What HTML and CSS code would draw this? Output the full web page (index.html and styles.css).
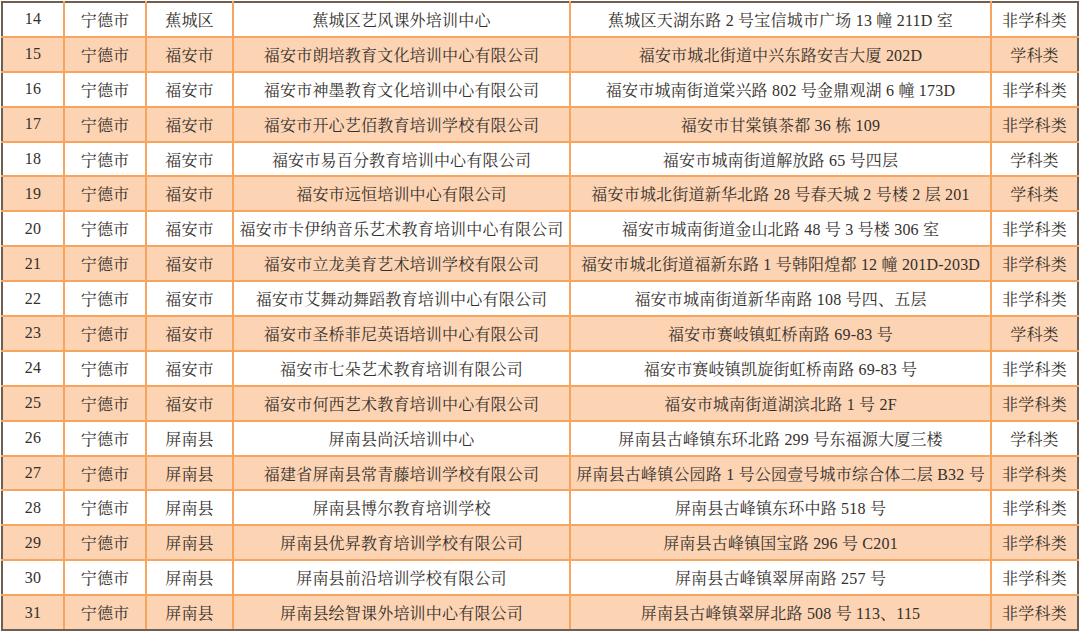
FILE: index.html
```html
<!DOCTYPE html>
<html lang="zh-CN">
<head>
<meta charset="utf-8">
<title>培训机构名单</title>
<link rel="stylesheet" href="styles.css">
</head>
<body>
<table class="list">
  <colgroup>
    <col class="c-no"><col class="c-city"><col class="c-area"><col class="c-name"><col class="c-addr"><col class="c-type">
  </colgroup>
  <tbody>
    <tr><td>14</td><td>宁德市</td><td>蕉城区</td><td>蕉城区艺风课外培训中心</td><td>蕉城区天湖东路 2 号宝信城市广场 13 幢 211D 室</td><td>非学科类</td></tr>
    <tr><td>15</td><td>宁德市</td><td>福安市</td><td>福安市朗培教育文化培训中心有限公司</td><td>福安市城北街道中兴东路安吉大厦 202D</td><td>学科类</td></tr>
    <tr><td>16</td><td>宁德市</td><td>福安市</td><td>福安市神墨教育文化培训中心有限公司</td><td>福安市城南街道棠兴路 802 号金鼎观湖 6 幢 173D</td><td>非学科类</td></tr>
    <tr><td>17</td><td>宁德市</td><td>福安市</td><td>福安市开心艺佰教育培训学校有限公司</td><td>福安市甘棠镇茶都 36 栋 109</td><td>非学科类</td></tr>
    <tr><td>18</td><td>宁德市</td><td>福安市</td><td>福安市易百分教育培训中心有限公司</td><td>福安市城南街道解放路 65 号四层</td><td>学科类</td></tr>
    <tr><td>19</td><td>宁德市</td><td>福安市</td><td>福安市远恒培训中心有限公司</td><td>福安市城北街道新华北路 28 号春天城 2 号楼 2 层 201</td><td>学科类</td></tr>
    <tr><td>20</td><td>宁德市</td><td>福安市</td><td>福安市卡伊纳音乐艺术教育培训中心有限公司</td><td>福安市城南街道金山北路 48 号 3 号楼 306 室</td><td>非学科类</td></tr>
    <tr><td>21</td><td>宁德市</td><td>福安市</td><td>福安市立龙美育艺术培训学校有限公司</td><td>福安市城北街道福新东路 1 号韩阳煌都 12 幢 201D-203D</td><td>非学科类</td></tr>
    <tr><td>22</td><td>宁德市</td><td>福安市</td><td>福安市艾舞动舞蹈教育培训中心有限公司</td><td>福安市城南街道新华南路 108 号四、五层</td><td>非学科类</td></tr>
    <tr><td>23</td><td>宁德市</td><td>福安市</td><td>福安市圣桥菲尼英语培训中心有限公司</td><td>福安市赛岐镇虹桥南路 69-83 号</td><td>学科类</td></tr>
    <tr><td>24</td><td>宁德市</td><td>福安市</td><td>福安市七朵艺术教育培训有限公司</td><td>福安市赛岐镇凯旋街虹桥南路 69-83 号</td><td>非学科类</td></tr>
    <tr><td>25</td><td>宁德市</td><td>福安市</td><td>福安市何西艺术教育培训中心有限公司</td><td>福安市城南街道湖滨北路 1 号 2F</td><td>非学科类</td></tr>
    <tr><td>26</td><td>宁德市</td><td>屏南县</td><td>屏南县尚沃培训中心</td><td>屏南县古峰镇东环北路 299 号东福源大厦三楼</td><td>学科类</td></tr>
    <tr><td>27</td><td>宁德市</td><td>屏南县</td><td>福建省屏南县常青藤培训学校有限公司</td><td>屏南县古峰镇公园路 1 号公园壹号城市综合体二层 B32 号</td><td>非学科类</td></tr>
    <tr><td>28</td><td>宁德市</td><td>屏南县</td><td>屏南县博尔教育培训学校</td><td>屏南县古峰镇东环中路 518 号</td><td>非学科类</td></tr>
    <tr><td>29</td><td>宁德市</td><td>屏南县</td><td>屏南县优昇教育培训学校有限公司</td><td>屏南县古峰镇国宝路 296 号 C201</td><td>非学科类</td></tr>
    <tr><td>30</td><td>宁德市</td><td>屏南县</td><td>屏南县前沿培训学校有限公司</td><td>屏南县古峰镇翠屏南路 257 号</td><td>非学科类</td></tr>
    <tr><td>31</td><td>宁德市</td><td>屏南县</td><td>屏南县绘智课外培训中心有限公司</td><td>屏南县古峰镇翠屏北路 508 号 113、115</td><td>非学科类</td></tr>
  </tbody>
</table>
</body>
</html>
```

FILE: styles.css
```css
html, body {
  margin: 0;
  padding: 0;
  background: #ffffff;
}

body {
  padding: 1px 0 0 1px;
}

.list {
  border-collapse: collapse;
  table-layout: fixed;
  width: 1076px;
  font-family: "Liberation Serif", "Noto Serif CJK SC", "Noto Sans CJK SC", serif;
  font-size: 16px;
  color: #35302c;
}

.c-no { width: 62px; }
.c-city { width: 82px; }
.c-area { width: 87px; }
.c-name { width: 337px; }
.c-addr { width: 421px; }
.c-type { width: 87px; }

.list td {
  height: 32.9px;
  padding: 0;
  text-align: center;
  vertical-align: middle;
  white-space: nowrap;
  border: 2px solid #f6a45e;
  letter-spacing: 0.2px;
}

.list tr:nth-child(even) td {
  background: #fcd4b4;
}

.list tr:first-child td { border-top-color: #6f5f52; }
.list tr:last-child td { border-bottom-color: #6f5f52; }
.list td:first-child { border-left-color: #6f5f52; }
.list td:last-child { border-right-color: #6f5f52; }
```
